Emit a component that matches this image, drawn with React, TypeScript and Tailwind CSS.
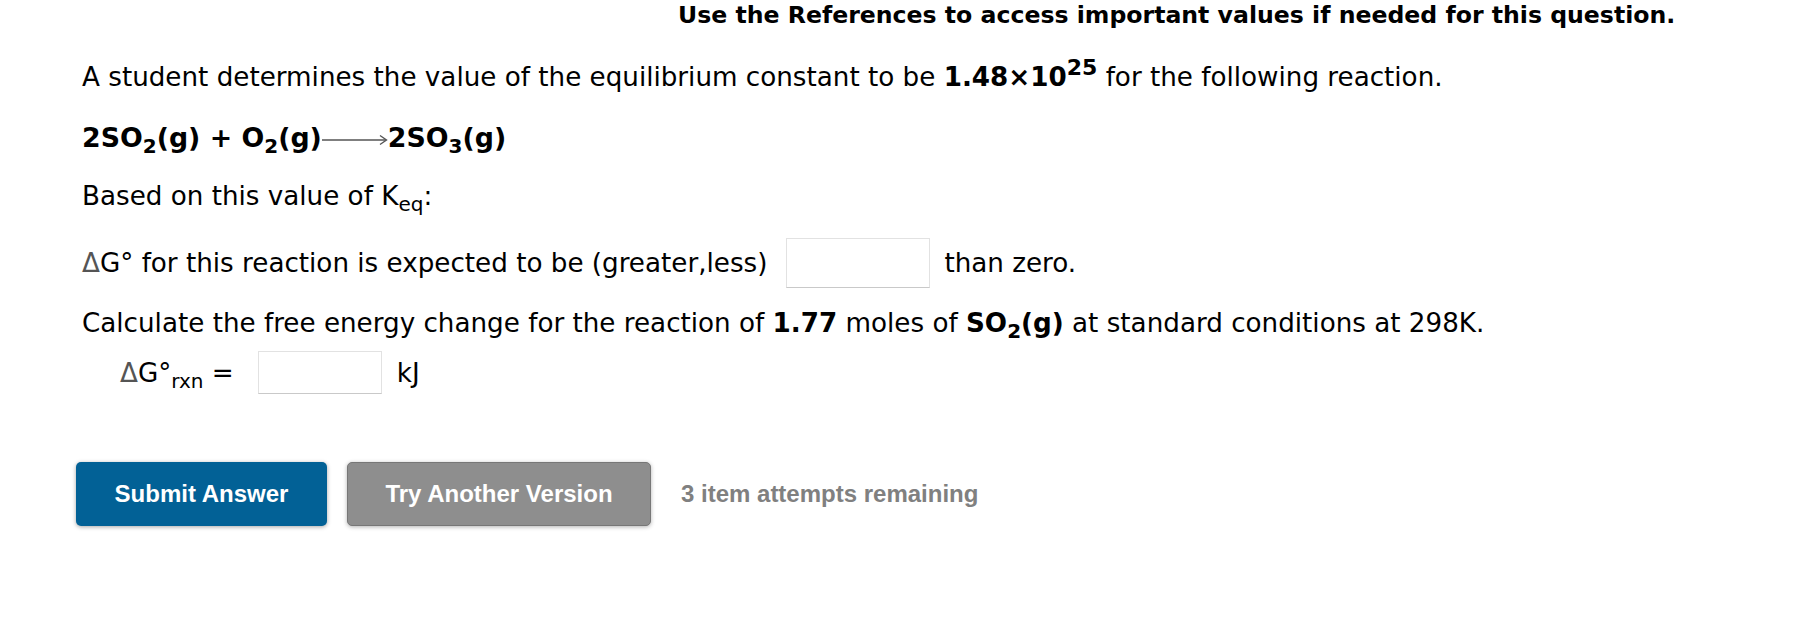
import React from 'react';

const Arrow: React.FC = () => (
  <svg width="66" height="14" viewBox="0 0 66 14" className="inline-block align-baseline">
    <line x1="0" y1="7" x2="64" y2="7" stroke="#555" strokeWidth="1.6" />
    <path d="M58 2.5 L64.5 7 L58 11.5" fill="none" stroke="#555" strokeWidth="1.4" />
  </svg>
);

const Sub: React.FC<{ children: React.ReactNode }> = ({ children }) => (
  <span className="relative top-[6px] text-[20px] leading-none">{children}</span>
);

const App: React.FC = () => {
  return (
    <div className="w-[1818px] h-[626px] bg-white text-black font-['DejaVu_Sans',Verdana,sans-serif] overflow-hidden">
      {/* references notice */}
      <div className="pt-[1px] pl-[678px] text-[23.6px] leading-[28px] font-bold whitespace-nowrap">
        Use the References to access important values if needed for this question.
      </div>

      <div className="pl-[82px] text-[26.2px] leading-[30px]">
        <p className="mt-[33px] h-[30px] whitespace-nowrap">
          A student determines the value of the equilibrium constant to be{' '}
          <b>
            1.48×10<span className="relative -top-[11px] text-[22px] leading-none">25</span>
          </b>{' '}
          for the following reaction.
        </p>

        <p className="mt-[31px] h-[30px] font-bold text-[26.8px] whitespace-nowrap">
          2SO<Sub>2</Sub>(g) + O<Sub>2</Sub>(g)
          <Arrow />
          2SO<Sub>3</Sub>(g)
        </p>

        <p className="mt-[28px] h-[30px] whitespace-nowrap">
          Based on this value of K<Sub>eq</Sub>:
        </p>

        <div className="mt-[27px] flex items-center h-[50px] whitespace-nowrap">
          <span>
            <span className="text-[#555]">Δ</span>G° for this reaction is expected to be (greater,less)
          </span>
          <input
            type="text"
            className="ml-[19px] w-[144px] h-[50px] bg-white border border-[#e2e2e2] border-b-[#c9c9c9] outline-none"
          />
          <span className="ml-[14px]">than zero.</span>
        </div>

        <p className="mt-[20px] h-[30px] whitespace-nowrap">
          Calculate the free energy change for the reaction of <b>1.77</b> moles of{' '}
          <b>
            SO<Sub>2</Sub>(g)
          </b>{' '}
          at standard conditions at 298K.
        </p>

        <div className="mt-[13px] pl-[38px] flex items-center h-[43px] whitespace-nowrap">
          <span>
            <span className="text-[#555]">Δ</span>G°<Sub>rxn</Sub> =
          </span>
          <input
            type="text"
            className="ml-[24px] w-[124px] h-[43px] bg-white border border-[#e2e2e2] border-b-[#c9c9c9] outline-none"
          />
          <span className="ml-[15px]">kJ</span>
        </div>
      </div>

      {/* actions */}
      <div className="mt-[68px] pl-[76px] flex items-center font-['Liberation_Sans',Arial,sans-serif] font-bold text-[24px]">
        <button className="w-[251px] h-[64px] rounded-[5px] bg-[#026196] text-white shadow-[0_1px_4px_rgba(0,0,0,0.35)]">
          Submit Answer
        </button>
        <button className="ml-[20px] w-[304px] h-[64px] rounded-[5px] bg-[#8e8e8e] border border-[#777] text-white shadow-[0_1px_4px_rgba(0,0,0,0.3)]">
          Try Another Version
        </button>
        <span className="ml-[30px] text-[#808080]">3 item attempts remaining</span>
      </div>
    </div>
  );
};

export default App;
